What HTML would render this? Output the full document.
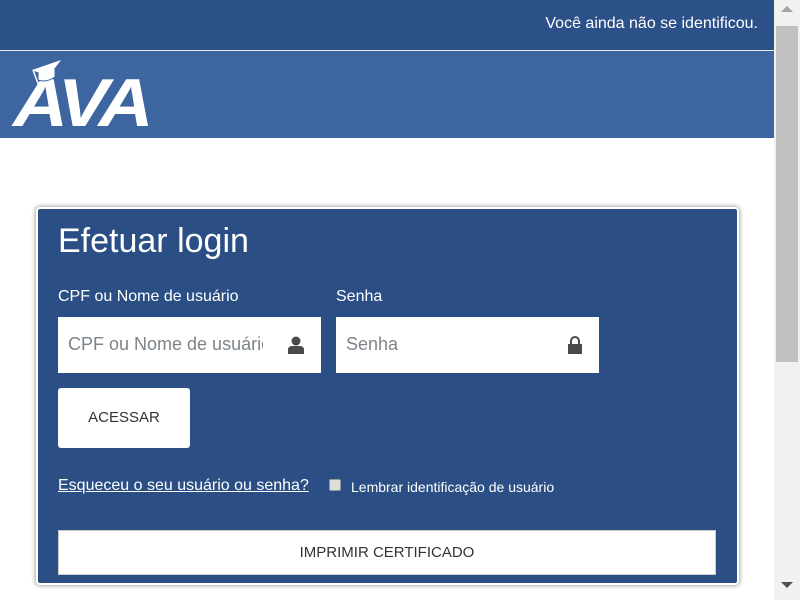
<!DOCTYPE html>
<html><head><meta charset="utf-8"><style>
*{margin:0;padding:0;box-sizing:border-box}
body{width:800px;height:600px;overflow:hidden;background:#fff;font-family:"Liberation Sans",Arial,sans-serif;position:relative}
.top{position:absolute;left:0;top:0;width:774px;height:50px;background:#2c5088;color:#fff;font-size:16px}
.top span{position:absolute;right:16px;top:15px}
.line{position:absolute;left:0;top:50px;width:774px;height:1px;background:#e8eef6}
.banner{position:absolute;left:0;top:51px;width:774px;height:87px;background:#3d65a0}
.sb{position:absolute;left:774px;top:0;width:26px;height:600px;background:#f1f1f1}
.thumb{position:absolute;left:776px;top:26px;width:22px;height:336px;background:#c1c1c1}
.panel{position:absolute;left:36px;top:207px;width:703px;height:378px;background:#2b4f84;border:2px solid #fff;border-radius:4px;box-shadow:0 0 4px 1px rgba(0,0,0,.35);color:#fff}
h1{position:absolute;left:20px;top:13px;font-weight:normal;font-size:34px}
.lbl{position:absolute;top:79px;font-size:16px}
.inp{position:absolute;top:108px;width:263px;height:56px;background:#fff;color:#7d8489;font-size:18px;padding:17px 0 0 10px;overflow:hidden;white-space:nowrap}
.inp svg{position:absolute;right:17px;top:19px}
.btn{position:absolute;left:20px;top:179px;width:132px;height:60px;background:#fff;border-radius:3px;color:#333;font-size:15px;text-align:center;line-height:60px}
.link{position:absolute;left:20px;top:268px;font-size:16px;text-decoration:underline}
.cb{position:absolute;left:291px;top:270px;width:12px;height:12px;background:#ddd;border:1px solid #999;border-radius:2px}
.cbl{position:absolute;left:313px;top:270px;font-size:14px}
.cert{position:absolute;left:20px;top:321px;width:658px;height:45px;background:#fff;border:1px solid #ccc;color:#333;font-size:15px;text-align:center;line-height:43px}
</style></head><body>
<div class="top"><span>Você ainda não se identificou.</span></div>
<div class="line"></div>
<div class="banner">
<svg width="170" height="87" viewBox="0 0 170 87">
<text x="0" y="0" transform="translate(13,75) scale(1.12,1)" font-family="Liberation Sans" font-weight="bold" font-style="italic" font-size="68" fill="#fff" letter-spacing="-4">AVA</text>
<polygon points="32,19 61,9 55,17 44,24" fill="#fff"/>
<path d="M38,21 L38,29 Q46,32 55,26 L55,17" fill="#fff" stroke="#3d65a0" stroke-width="1"/>
<line x1="33" y1="19" x2="40" y2="38" stroke="#fff" stroke-width="1.5"/>
</svg>
</div>
<div class="sb"></div><div class="thumb"></div>
<div style="position:absolute;left:781px;top:6px;width:0;height:0;border-left:6px solid transparent;border-right:6px solid transparent;border-bottom:6px solid #a3a3a3"></div>
<div style="position:absolute;left:781px;top:582px;width:0;height:0;border-left:6px solid transparent;border-right:6px solid transparent;border-top:6px solid #505050"></div>
<div class="panel">
<h1>Efetuar login</h1>
<div class="lbl" style="left:20px">CPF ou Nome de usuário</div>
<div class="lbl" style="left:298px">Senha</div>
<div class="inp" style="left:20px"><span style="display:inline-block;width:195px;overflow:hidden">CPF ou Nome de usuário</span>
<svg width="16" height="18" viewBox="0 0 16 18"><circle cx="8" cy="5" r="4.5" fill="#4a4a4a"/><path d="M0,18 L0,14 Q0,10 4,10 L12,10 Q16,10 16,14 L16,18Z" fill="#4a4a4a"/></svg></div>
<div class="inp" style="left:298px">Senha
<svg width="14" height="18" viewBox="0 0 14 18"><path d="M3,8 V5 A4,4 0 0 1 11,5 V8" fill="none" stroke="#4a4a4a" stroke-width="2"/><rect x="0" y="8" width="14" height="10" fill="#4a4a4a"/></svg></div>
<div class="btn">ACESSAR</div>
<div class="link">Esqueceu o seu usuário ou senha?</div>
<div class="cb"></div>
<div class="cbl">Lembrar identificação de usuário</div>
<div class="cert">IMPRIMIR CERTIFICADO</div>
</div>
</body></html>
